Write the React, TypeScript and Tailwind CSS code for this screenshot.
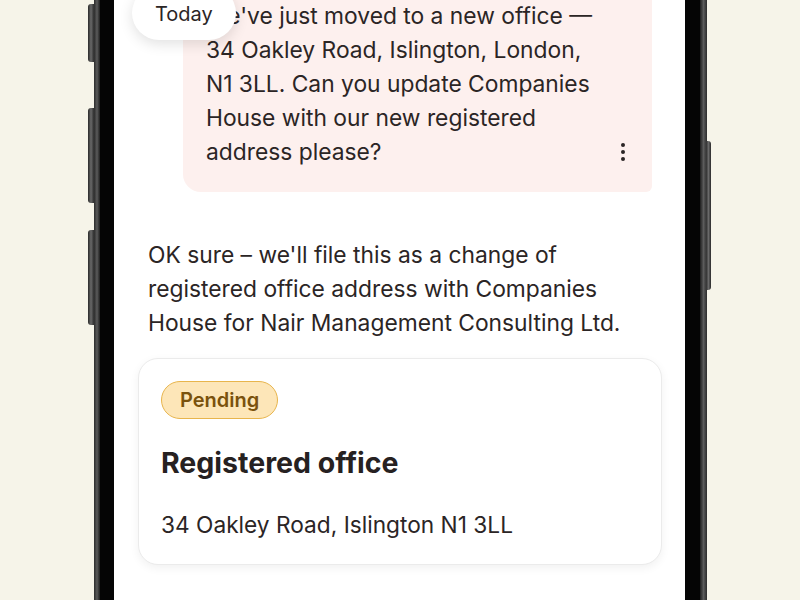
import React from "react";

export default function App() {
  return (
    <div
      className="w-[800px] h-[600px] overflow-hidden bg-[#f6f4e9] flex"
      style={{ fontFamily: "Inter, 'Noto Sans', sans-serif" }}
    >
      <div className="relative ml-[94px] w-[613px] h-full flex">
        {/* side buttons */}
        <div className="absolute left-[-6px] top-[4px] w-[6px] h-[58px] rounded-l-[3px] bg-gradient-to-r from-[#2a2a2a] via-[#6a6a6a] to-[#2e2e2e]" />
        <div className="absolute left-[-6px] top-[108px] w-[6px] h-[95px] rounded-l-[3px] bg-gradient-to-r from-[#2a2a2a] via-[#6a6a6a] to-[#2e2e2e]" />
        <div className="absolute left-[-6px] top-[230px] w-[6px] h-[95px] rounded-l-[3px] bg-gradient-to-r from-[#2a2a2a] via-[#6a6a6a] to-[#2e2e2e]" />
        <div className="absolute right-[-4px] top-[141px] w-[5px] h-[149px] rounded-r-[3px] bg-gradient-to-r from-[#2e2e2e] via-[#6a6a6a] to-[#2a2a2a]" />

        {/* left bezel */}
        <div className="w-[6px] h-full bg-gradient-to-r from-[#2c2c2c] via-[#5c5c5c] to-[#1e1e1e]" />
        <div className="w-[14px] h-full bg-[#050505]" />

        {/* screen */}
        <div className="relative w-[571px] h-full bg-white overflow-hidden text-[#2b2525]">
          <div className="absolute z-10 left-[18px] top-[-14px] h-[54px] px-[23px] rounded-full bg-white shadow-[0_4px_14px_rgba(0,0,0,0.12)] flex items-center">
            <span className="text-[20px] leading-none text-[#2b2525] pt-[1px]">Today</span>
          </div>

          <div className="mt-[-17px] flex flex-col">
            <div className="ml-[69px] mr-[33px] bg-[#fdf0ee] rounded-bl-[18px] rounded-br-[6px] pl-[23px] pr-[26px] pt-[16px] pb-[23px] flex items-end justify-between">
              <p className="w-[400px] text-[22.8px] leading-[34px]">
                We've just moved to a new office — 34 Oakley Road, Islington, London, N1 3LL. Can you update Companies House with our new registered address please?
              </p>
              <svg width="6" height="20" viewBox="0 0 6 20" className="mb-[7px] shrink-0">
                <circle cx="3" cy="3" r="2" fill="#2b2525" />
                <circle cx="3" cy="10" r="2" fill="#2b2525" />
                <circle cx="3" cy="17" r="2" fill="#2b2525" />
              </svg>
            </div>

            <p className="mt-[46px] pl-[34px] pr-[34px] text-[22.8px] leading-[34px]">
              OK sure – we'll file this as a change of registered office address with Companies House for Nair Management Consulting Ltd.
            </p>

            <div className="mt-[18px] ml-[24px] mr-[23px] rounded-[20px] border border-[#ebebeb] bg-white shadow-[0_3px_10px_rgba(0,0,0,0.06)] pl-[22px] pr-[22px] pt-[22px] pb-[23px] flex flex-col items-start">
              <div className="h-[38px] px-[18px] rounded-full bg-[#fde6b8] border-[1.5px] border-[#e8b54c] flex items-center">
                <span className="text-[20px] font-semibold text-[#7a520c]">Pending</span>
              </div>
              <h2 className="mt-[26px] text-[28.5px] leading-[36px] font-bold text-[#262121]">Registered office</h2>
              <p className="mt-[28px] text-[22.7px] leading-[32px]">34 Oakley Road, Islington N1 3LL</p>
            </div>
          </div>
        </div>

        {/* right bezel */}
        <div className="w-[15px] h-full bg-[#050505]" />
        <div className="w-[7px] h-full bg-gradient-to-r from-[#1e1e1e] via-[#5c5c5c] to-[#2c2c2c]" />
      </div>
    </div>
  );
}
